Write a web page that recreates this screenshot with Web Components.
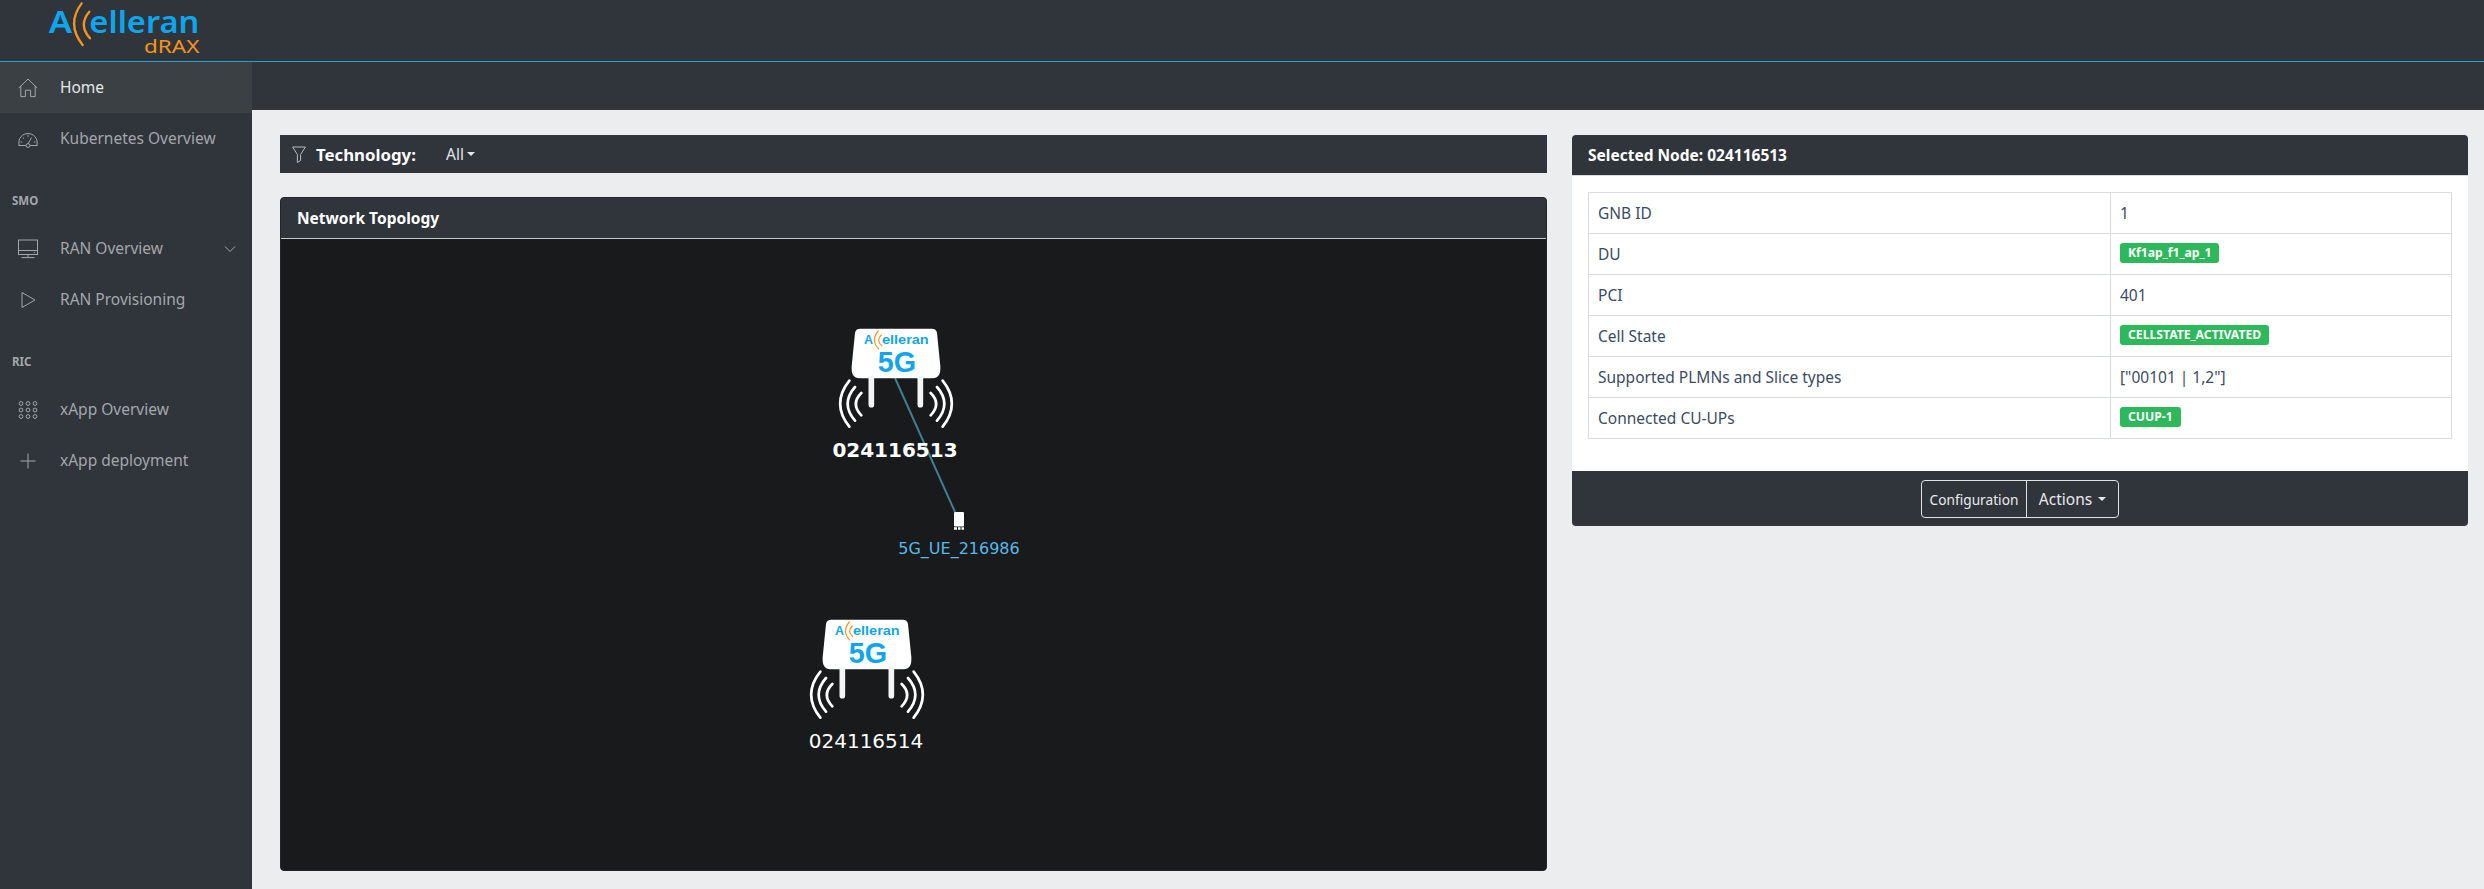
<!DOCTYPE html>
<html>
<head>
<meta charset="utf-8">
<title>dRAX</title>
<style>
  html, body { margin: 0; height: 889px; overflow: hidden; }
  body { font: 15.5px "Noto Sans", "Open Sans", sans-serif; background: #ebedef; }
</style>
</head>
<body>
<drax-app>
  <top-bar slot="top"></top-bar>
  <side-nav slot="side">
    <nav-item icon="home" active>Home</nav-item>
    <nav-item icon="gauge">Kubernetes Overview</nav-item>
    <nav-title>SMO</nav-title>
    <nav-item icon="monitor" chevron>RAN Overview</nav-item>
    <nav-item icon="play">RAN Provisioning</nav-item>
    <nav-title>RIC</nav-title>
    <nav-item icon="grid">xApp Overview</nav-item>
    <nav-item icon="plus">xApp deployment</nav-item>
  </side-nav>
  <div slot="left" style="display:flex;flex-direction:column;gap:24px;height:100%">
    <filter-bar label="Technology:" value="All"></filter-bar>
    <dark-card heading="Network Topology" style="flex:1">
      <topo-canvas>
        <gnb-node x="550" y="84" name="024116513" selected></gnb-node>
        <gnb-node x="521" y="375" name="024116514"></gnb-node>
        <ue-node x="673" y="272" name="5G_UE_216986"></ue-node>
      </topo-canvas>
    </dark-card>
  </div>
  <dark-card slot="right" heading="Selected Node: 024116513" flat>
    <info-table>
      <info-row label="GNB ID">1</info-row>
      <info-row label="DU"><status-badge>Kf1ap_f1_ap_1</status-badge></info-row>
      <info-row label="PCI">401</info-row>
      <info-row label="Cell State"><status-badge>CELLSTATE_ACTIVATED</status-badge></info-row>
      <info-row label="Supported PLMNs and Slice types">["00101 | 1,2"]</info-row>
      <info-row label="Connected CU-UPs"><status-badge>CUUP-1</status-badge></info-row>
    </info-table>
    <node-actions slot="footer"></node-actions>
  </dark-card>
</drax-app>

<script>
const DARK = '#30343b';

function shadow(el, html) {
  const s = el.attachShadow({ mode: 'open' });
  s.innerHTML = html;
  return s;
}

customElements.define('drax-app', class extends HTMLElement {
  constructor() {
    super();
    shadow(this, `
      <style>
        :host { display: grid; grid-template-columns: 252px 1fr; grid-template-rows: 62px 48px 1fr; height: 889px; }
        .top { grid-column: 1 / 3; }
        .side { grid-row: 2 / 4; min-height: 0; }
        .sub { background: ${DARK}; }
        main { display: grid; grid-template-columns: 1267px 896px; gap: 25px; padding: 25px 16px 18px 28px; min-height: 0; align-items: stretch; }
        .r { align-self: start; }
      </style>
      <div class="top"><slot name="top"></slot></div>
      <div class="side"><slot name="side"></slot></div>
      <div class="sub"></div>
      <main>
        <div><slot name="left"></slot></div>
        <div class="r"><slot name="right"></slot></div>
      </main>`);
  }
});

customElements.define('top-bar', class extends HTMLElement {
  constructor() {
    super();
    shadow(this, `
      <style>
        :host { display: block; height: 62px; box-sizing: border-box; background: ${DARK}; border-bottom: 1px solid #2b9fce; }
        svg { display: block; }
        text { font-family: "Noto Sans", sans-serif; }
      </style>
      <svg width="252" height="61" viewBox="0 0 756 183">
        <text x="146" y="100" font-size="94" font-weight="600" fill="#0ca6ee" textLength="70" lengthAdjust="spacingAndGlyphs">A</text>
        <path d="M245 10Q198 72 248 135M268 35Q234 75 270 115" fill="none" stroke="#f7941d" stroke-width="7" stroke-linecap="round"/>
        <text x="268" y="100" font-size="92" font-weight="600" fill="#0ca6ee" textLength="330" lengthAdjust="spacingAndGlyphs">elleran</text>
        <text x="432" y="158" font-size="56" fill="#f7941d" textLength="166" lengthAdjust="spacingAndGlyphs">dRAX</text>
      </svg>`);
  }
});

customElements.define('side-nav', class extends HTMLElement {
  constructor() {
    super();
    shadow(this, `
      <style>
        :host { display: flex; flex-direction: column; height: 100%; background: ${DARK}; }
      </style>
      <slot></slot>`);
  }
});

customElements.define('nav-title', class extends HTMLElement {
  constructor() {
    super();
    shadow(this, `
      <style>
        :host { display: block; height: 20px; line-height: 20px; margin: 27px 0 12px; padding-left: 12px; font-size: 11.5px; font-weight: 700; color: #a3a7ab; }
      </style>
      <slot></slot>`);
  }
});

const NAV_ICONS = {
  home: '<path d="M.8 10L10 1 19.2 10M2.8 8.2V18.6H7.4V12.2H12.6V18.6H17.2V8.2"/>',
  gauge: '<path d="M.5 16.5H7.8M12.2 16.5H19.5M1.2 16.5C-.6 9.5 4.5 4.5 10 4.5s10.6 5 8.8 12M10 15L13.5 8.5"/><circle cx="10" cy="16.5" r="1.9"/><path d="M10 6v1.8M4.8 8.5l1.2 1.2M2.5 13H4.2M15.8 13H17.5"/>',
  monitor: '<rect x=".5" y="1" width="19" height="14.5"/><path d="M.5 11.5H19.5M10 15.5V18.6M3.5 18.6H16.5"/><circle cx="16.3" cy="13.5" r=".3"/>',
  play: '<path d="M4 2.5V17.5L17 10Z"/>',
  grid: '<circle cx="3" cy="3.5" r="1.9"/><circle cx="10" cy="3.5" r="1.9"/><circle cx="17" cy="3.5" r="1.9"/><circle cx="3" cy="10" r="1.9"/><circle cx="10" cy="10" r="1.9"/><circle cx="17" cy="10" r="1.9"/><circle cx="3" cy="16.5" r="1.9"/><circle cx="10" cy="16.5" r="1.9"/><circle cx="17" cy="16.5" r="1.9"/>',
  plus: '<path d="M10 2.5V17.5M2.5 10H17.5"/>'
};

customElements.define('nav-item', class extends HTMLElement {
  constructor() {
    super();
    shadow(this, `
      <style>
        :host { display: flex; align-items: center; height: 51px; padding: 0 16px 0 18px; color: #a3a7ab; }
        :host([active]) { background: #3b4045; color: #e6e7e8; }
        svg.i { width: 20px; height: 20px; margin-right: 22px; flex: none; fill: none; stroke: #a3a7ab; stroke-width: 1; }
        span { flex: 1; white-space: nowrap; position: relative; top: -1px; }
        svg.c { width: 12px; height: 12px; fill: none; stroke: #a3a7ab; stroke-width: 1; display: none; }
        :host([chevron]) svg.c { display: block; }
      </style>
      <svg class="i" viewBox="0 0 20 20"></svg><span><slot></slot></span>
      <svg class="c" viewBox="0 0 12 12"><path d="M1 3.5L6 8.5 11 3.5"/></svg>`);
  }
  connectedCallback() {
    this.shadowRoot.querySelector('svg.i').innerHTML = NAV_ICONS[this.getAttribute('icon')] || '';
  }
});

customElements.define('filter-bar', class extends HTMLElement {
  constructor() {
    super();
    this.s = shadow(this, `
      <style>
        :host { display: flex; align-items: center; height: 38px; background: ${DARK}; color: #fff; flex: none; }
        svg { width: 14px; height: 17px; margin: 0 10px 0 12px; fill: none; stroke: #b9bcc0; stroke-width: 1; }
        b { font-size: 16.8px; width: 130px; white-space: nowrap; }
        span { font-size: 15.5px; color: #e4e6e8; }
        i { display: inline-block; margin-left: 3px; border: 4px solid transparent; border-top-color: #e4e6e8; border-bottom: 0; }
      </style>
      <svg viewBox="0 0 14 17"><path d="M.6 1H13.4L8.6 8.5V14.5L5.4 16.5V8.5Z"/></svg>
      <b></b><span></span><i></i>`);
  }
  connectedCallback() {
    this.s.querySelector('b').textContent = this.getAttribute('label');
    this.s.querySelector('span').textContent = this.getAttribute('value');
  }
});

customElements.define('dark-card', class extends HTMLElement {
  constructor() {
    super();
    this.s = shadow(this, `
      <style>
        :host { display: flex; flex-direction: column; box-sizing: border-box; background: #181a1c; border-radius: 4px; overflow: hidden; border: 1px solid #22252a; }
        header { height: 41px; line-height: 40px; box-sizing: border-box; padding-left: 16px; background: ${DARK}; color: #fff; font-weight: 700; font-size: 15.5px; border-bottom: 1px solid #c4c9d0; flex: none; }
        .body { flex: 1; min-height: 0; position: relative; }
        :host([flat]) { background: #fff; border: 0; }
        :host([flat]) header { border-bottom-color: #d8dbe0; line-height: 41px; }
        :host([flat]) .body { padding: 16px 16px 0; height: 295px; box-sizing: border-box; flex: none; }
        footer { background: ${DARK}; display: none; }
        :host([flat]) footer { display: block; }
      </style>
      <header></header>
      <div class="body"><slot></slot></div>
      <footer><slot name="footer"></slot></footer>`);
  }
  connectedCallback() {
    this.s.querySelector('header').textContent = this.getAttribute('heading');
  }
});

customElements.define('topo-canvas', class extends HTMLElement {
  constructor() {
    super();
    shadow(this, `
      <style>
        :host { display: block; position: relative; height: 100%; }
        svg { position: absolute; inset: 0; width: 100%; height: 100%; }
      </style>
      <svg><line x1="614" y1="139" x2="674" y2="273" stroke="#3f7f90" stroke-width="2"/></svg>
      <slot></slot>`);
  }
});

customElements.define('gnb-node', class extends HTMLElement {
  constructor() {
    super();
    this.s = shadow(this, `
      <style>
        :host { position: absolute; display: block; width: 130px; height: 150px; }
        svg { display: block; width: 130px; height: 110px; }
        .label { position: absolute; left: -21px; right: -19px; top: 114px; text-align: center; color: #fff; font: 20px/26px "DejaVu Sans", sans-serif; }
        :host([selected]) .label { font-weight: 700; }
        .t { font-family: "Liberation Sans", sans-serif; fill: #12a5ee; font-weight: 700; }
      </style>
      <svg viewBox="150 70 390 330">
        <path d="M238 87H452Q466 87 468 100L478 200Q480 236 455 236H235Q210 236 212 200L222 100Q224 87 238 87Z" fill="#fff"/>
        <path d="M271 236V315M418 236V315" stroke="#f4f5f5" stroke-width="17" stroke-linecap="round" fill="none"/>
        <g fill="none" stroke="#fff" stroke-width="8" stroke-linecap="round">
          <path d="M205 243Q150 312 205 381M222 262Q178 312 222 363M241 280Q208 312 241 347"/>
          <path d="M485 243Q540 312 485 381M468 262Q512 312 468 363M449 280Q482 312 449 347"/>
        </g>
        <text class="t" x="249" y="132" font-size="36" textLength="27" lengthAdjust="spacingAndGlyphs">A</text>
        <path d="M292 94Q268 122 293 148M301 106Q284 122 302 138" fill="none" stroke="#f7941d" stroke-width="3.5" stroke-linecap="round"/>
        <text class="t" x="303" y="132" font-size="36" textLength="140" lengthAdjust="spacingAndGlyphs">elleran</text>
        <text class="t" x="290" y="218" font-size="86" textLength="115" lengthAdjust="spacingAndGlyphs">5G</text>
      </svg>
      <div class="label"></div>`);
  }
  connectedCallback() {
    this.style.left = this.getAttribute('x') + 'px';
    this.style.top = this.getAttribute('y') + 'px';
    this.s.querySelector('.label').textContent = this.getAttribute('name');
  }
});

customElements.define('ue-node', class extends HTMLElement {
  constructor() {
    super();
    this.s = shadow(this, `
      <style>
        :host { position: absolute; display: block; width: 10px; height: 20px; }
        svg { display: block; width: 10px; height: 20px; }
        .label { position: absolute; left: -60px; width: 130px; top: 28px; text-align: center; color: #5bb8e8; font: 16px/20px "DejaVu Sans", sans-serif; white-space: nowrap; }
      </style>
      <svg viewBox="0 0 10 20">
        <rect x="0" y="1" width="10" height="14.5" rx="1" fill="#fff"/>
        <path d="M0 17.5H3M4 17.5H6.5M7.5 17.5H10" stroke="#fff" stroke-width="2.5"/>
      </svg>
      <div class="label"></div>`);
  }
  connectedCallback() {
    this.style.left = this.getAttribute('x') + 'px';
    this.style.top = this.getAttribute('y') + 'px';
    this.s.querySelector('.label').textContent = this.getAttribute('name');
  }
});

customElements.define('info-table', class extends HTMLElement {
  constructor() {
    super();
    shadow(this, `
      <style>
        :host { display: block; border-top: 1px solid #d8dbe0; border-left: 1px solid #d8dbe0; border-right: 1px solid #d8dbe0; }
      </style>
      <slot></slot>`);
  }
});

customElements.define('info-row', class extends HTMLElement {
  constructor() {
    super();
    this.s = shadow(this, `
      <style>
        :host { display: grid; grid-template-columns: 521px 1fr; height: 41px; box-sizing: border-box; border-bottom: 1px solid #d8dbe0; color: #3c4b64; font-size: 15.5px; }
        div { display: flex; align-items: center; padding: 0 0 0 9px; white-space: nowrap; }
        .v { border-left: 1px solid #d8dbe0; }
      </style>
      <div class="k"></div><div class="v"><slot></slot></div>`);
  }
  connectedCallback() {
    this.s.querySelector('.k').textContent = this.getAttribute('label');
  }
});

customElements.define('status-badge', class extends HTMLElement {
  constructor() {
    super();
    shadow(this, `
      <style>
        :host { display: inline-block; height: 20px; line-height: 19px; padding: 0 8px; background: #2eb85c; color: #fff; font-size: 12.2px; font-weight: 700; border-radius: 3px; margin-top: -2px; }
      </style>
      <slot></slot>`);
  }
});

customElements.define('node-actions', class extends HTMLElement {
  constructor() {
    super();
    shadow(this, `
      <style>
        :host { display: flex; justify-content: center; height: 55px; padding-top: 9px; box-sizing: border-box; color: #e8eaec; }
        .group { display: flex; height: 38px; box-sizing: border-box; border: 1px solid #e0e2e4; border-radius: 4px; }
        span { display: flex; align-items: center; justify-content: center; box-sizing: border-box; }
        .a { width: 105px; font-size: 13.7px; border-right: 1px solid #e0e2e4; }
        .b { width: 91px; font-size: 15.5px; }
        i { display: inline-block; margin-left: 6px; border: 4px solid transparent; border-top-color: #e8eaec; border-bottom: 0; }
      </style>
      <div class="group"><span class="a">Configuration</span><span class="b">Actions<i></i></span></div>`);
  }
});
</script>
</body>
</html>
